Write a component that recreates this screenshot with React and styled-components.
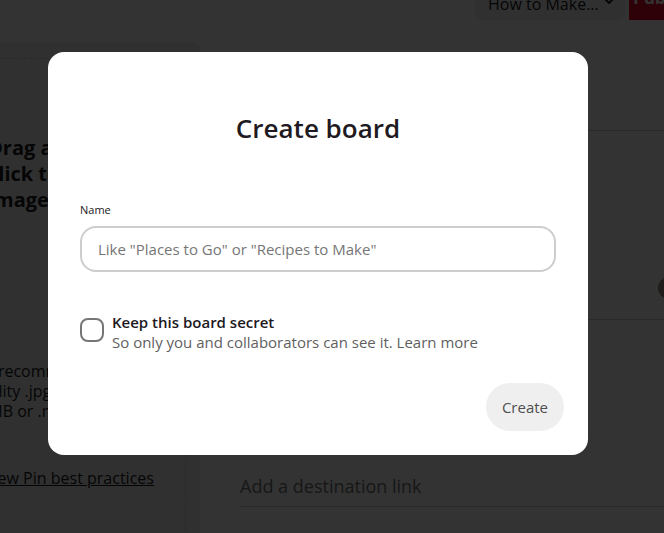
import styled, { createGlobalStyle } from 'styled-components';

const GlobalStyle = createGlobalStyle`
  html, body {
    margin: 0;
    padding: 0;
    overflow: hidden;
  }
  body {
    font-family: "Open Sans", "Liberation Sans", sans-serif;
    color: #211922;
    background: #fff;
  }
  * { box-sizing: border-box; }
`;

const Page = styled.div`
  position: relative;
  width: 664px;
  height: 533px;
  overflow: hidden;
  background: #fff;
`;

const Header = styled.div`
  display: flex;
  justify-content: flex-end;
  gap: 4px;
  height: 40px;
  margin-top: -20px;
  margin-right: -40px;
`;

const BoardPicker = styled.div`
  display: flex;
  align-items: center;
  justify-content: space-between;
  width: 150px;
  height: 40px;
  padding: 8px 10px 0 13px;
  background: #efefef;
  border-radius: 0 0 8px 8px;
  font-size: 16px;
  line-height: 20px;
`;

const Chevron = styled.svg`
  width: 12px;
  height: 12px;
  margin-top: -6px;
`;

const PublishButton = styled.div`
  width: 75px;
  height: 40px;
  padding: 8px 0 0 4px;
  background: #e60023;
  color: #fff;
  font-weight: 700;
  font-size: 17px;
  line-height: 20px;
`;

const Main = styled.div`
  display: flex;
  gap: 40px;
  margin-top: 22px;
`;

const UploadPanel = styled.div`
  flex: none;
  width: 260px;
  height: 500px;
  margin-left: -60px;
  padding: 16px 14px 0 16px;
  background: #efefef;
  border-radius: 0 8px 0 0;
`;

const DropZone = styled.div`
  height: 100%;
  border: 1px dashed #cdcdcd;
  border-radius: 8px;
  display: flex;
  flex-direction: column;
  padding: 76px 0 0 38px;
`;

const DropTitle = styled.div`
  font-size: 20px;
  font-weight: 700;
  line-height: 26px;
  margin-left: -7px;
`;

const DropHint = styled.div`
  margin-top: 148px;
  font-size: 16px;
  line-height: 20px;
  margin-left: -25px;
  white-space: nowrap;
`;

const PracticesLink = styled.div`
  margin-top: 46px;
  font-size: 16px;
  text-decoration: underline;
  margin-left: -11px;
`;

const FormColumn = styled.div`
  flex: 1;
  display: flex;
  flex-direction: column;
`;

const Rule = styled.div`
  height: 1px;
  background: #cdcdcd;
  margin-top: ${p => p.$top}px;
`;

const AvatarRow = styled.div`
  display: flex;
  justify-content: flex-end;
  margin-top: 146px;
  margin-right: -16px;
`;

const Avatar = styled.div`
  width: 22px;
  height: 22px;
  border-radius: 50%;
  background: #a08a86;
`;

const LinkField = styled.div`
  margin-top: 154px;
  font-size: 18px;
  color: #767676;
  line-height: 24px;
`;

const Overlay = styled.div`
  position: absolute;
  inset: 0;
  background: rgba(0, 0, 0, 0.8);
  padding: 52px 0 0 48px;
`;

const Modal = styled.div`
  width: 540px;
  background: #fff;
  border-radius: 16px;
  display: flex;
  flex-direction: column;
`;

const ModalTitle = styled.h1`
  margin: 0;
  padding: 58px 0 57px;
  text-align: center;
  font-size: 26px;
  font-weight: 600;
  line-height: 36px;
  color: #211922;
`;

const Body = styled.div`
  padding: 0 32px;
  display: flex;
  flex-direction: column;
`;

const Label = styled.label`
  font-size: 11px;
  line-height: 14px;
  margin-bottom: 9px;
  color: #211922;
`;

const TextInput = styled.input`
  height: 46px;
  width: 100%;
  border: 2px solid #cdcdcd;
  border-radius: 16px;
  padding: 0 16px;
  font-family: inherit;
  font-size: 15px;
  color: #211922;
  outline: none;
  &::placeholder { color: #767676; }
`;

const SecretRow = styled.div`
  display: flex;
  align-items: flex-start;
  gap: 8px;
  margin-top: 40px;
`;

const Checkbox = styled.div`
  flex: none;
  width: 24px;
  height: 24px;
  margin-top: 6px;
  border: 2px solid #767676;
  border-radius: 8px;
`;

const SecretText = styled.div`
  display: flex;
  flex-direction: column;
`;

const SecretTitle = styled.div`
  font-size: 15px;
  font-weight: 600;
  line-height: 20px;
  color: #211922;
`;

const SecretSub = styled.div`
  font-size: 15px;
  line-height: 20px;
  color: #5f5f5f;
`;

const Footer = styled.div`
  display: flex;
  justify-content: flex-end;
  padding: 31px 24px 24px;
`;

const CreateButton = styled.button`
  height: 48px;
  padding: 0 16px;
  border: none;
  border-radius: 24px;
  background: #efefef;
  color: #4f4f4f;
  font-family: inherit;
  font-size: 15px;
`;

export default function App() {
  return (
    <Page>
      <GlobalStyle />
      <Header>
        <BoardPicker>
          <span>How to Make...</span>
          <Chevron viewBox="0 0 24 24">
            <path d="M3 7l9 9 9-9" fill="none" stroke="#211922" strokeWidth="4" strokeLinecap="round" strokeLinejoin="round" />
          </Chevron>
        </BoardPicker>
        <PublishButton>Publish</PublishButton>
      </Header>
      <Main>
        <UploadPanel>
          <DropZone>
            <DropTitle>Drag and drop or<br />click to upload<br />images</DropTitle>
            <DropHint>We recommend using high<br />quality .jpg files less than<br />20MB or .mp4 files less than 200MB</DropHint>
            <PracticesLink>View Pin best practices</PracticesLink>
          </DropZone>
        </UploadPanel>
        <FormColumn>
          <Rule $top={88} />
          <AvatarRow><Avatar /></AvatarRow>
          <Rule $top={20} />
          <LinkField>Add a destination link</LinkField>
          <Rule $top={8} />
        </FormColumn>
      </Main>
      <Overlay>
        <Modal>
          <ModalTitle>Create board</ModalTitle>
          <Body>
            <Label>Name</Label>
            <TextInput placeholder={'Like "Places to Go" or "Recipes to Make"'} />
            <SecretRow>
              <Checkbox />
              <SecretText>
                <SecretTitle>Keep this board secret</SecretTitle>
                <SecretSub>So only you and collaborators can see it. Learn more</SecretSub>
              </SecretText>
            </SecretRow>
          </Body>
          <Footer>
            <CreateButton>Create</CreateButton>
          </Footer>
        </Modal>
      </Overlay>
    </Page>
  );
}
